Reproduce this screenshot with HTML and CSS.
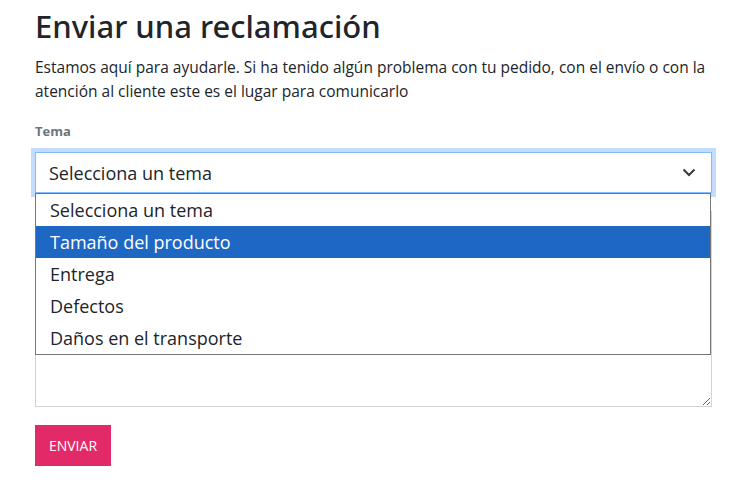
FILE: index.html
```html
<!DOCTYPE html>
<html lang="es">
<head>
<meta charset="utf-8">
<title>Enviar una reclamación</title>
<link rel="stylesheet" href="styles.css">
</head>
<body>
<main class="page">
  <h1 class="title">Enviar una reclamación</h1>
  <p class="intro">Estamos aquí para ayudarle. Si ha tenido algún problema con tu pedido, con el envío o con la atención al cliente este es el lugar para comunicarlo</p>
  <form class="form">
    <div class="field">
      <label class="label">Tema</label>
      <div class="select-wrap">
        <div class="select">
          <span>Selecciona un tema</span>
          <svg class="chev" width="14" height="9" viewBox="0 0 14 9"><path d="M1.5 1.5 L7 7 L12.5 1.5" fill="none" stroke="#343a40" stroke-width="2"/></svg>
        </div>
        <ul class="menu">
          <li class="opt">Selecciona un tema</li>
          <li class="opt active">Tamaño del producto</li>
          <li class="opt">Entrega</li>
          <li class="opt">Defectos</li>
          <li class="opt">Daños en el transporte</li>
        </ul>
      </div>
    </div>
    <div class="field">
      <textarea class="textarea" aria-label="Descripción"></textarea>
    </div>
    <button type="button" class="btn">ENVIAR</button>
  </form>
</main>
</body>
</html>
```
FILE: styles.css
```css
* { box-sizing: border-box; }
body {
  margin: 0;
  background: #fff;
  font-family: "Open Sans", "Noto Sans", sans-serif;
  color: #212529;
}
.page {
  width: 677px;
  margin-left: 35px;
  padding-top: 6px;
}
.title {
  margin: 0 0 9px;
  font-family: "Noto Sans", "Open Sans", sans-serif;
  font-weight: 500;
  font-size: 31px;
  line-height: 40px;
  color: #212529;
}
.intro {
  margin: 0 0 18px;
  font-size: 15.5px;
  line-height: 24px;
  color: #212529;
}
.field { margin-bottom: 18px; }
.label {
  display: block;
  font-size: 13px;
  font-weight: 700;
  color: #6c757d;
  line-height: 20px;
  margin-bottom: 11px;
}
.select-wrap { position: relative; }
.select {
  height: 41px;
  border: 1px solid #80bdff;
  box-shadow: 0 0 0 4px #c3dcfd;
  display: flex;
  align-items: center;
  justify-content: space-between;
  padding: 0 15px 0 13px;
  font-size: 18px;
  color: #212529;
  background: #fff;
}
.chev { display: block; }
.menu {
  position: absolute;
  z-index: 2;
  top: 41px;
  left: 0;
  width: 676px;
  margin: 0;
  padding: 0;
  list-style: none;
  background: #fff;
  border: 1px solid #767676;
}
.opt {
  height: 32px;
  line-height: 32px;
  padding-left: 14px;
  font-size: 18px;
  color: #212529;
}
.opt.active {
  background: #1e68c4;
  color: #fff;
}
.textarea {
  display: block;
  width: 677px;
  height: 196px;
  border: 1px solid #ced4da;
  resize: vertical;
  margin: 0;
}
.btn {
  display: block;
  border: 0;
  background: #e32a68;
  color: #fff;
  font-family: "Open Sans", sans-serif;
  font-size: 14px;
  width: 76px;
  height: 41px;
  padding: 0;
}
```
